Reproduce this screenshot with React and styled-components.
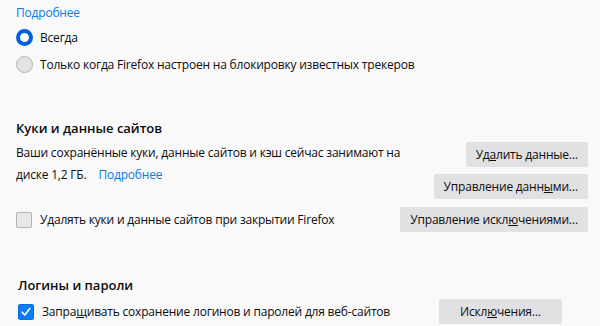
import React from "react";
import styled, { createGlobalStyle } from "styled-components";

const GlobalStyle = createGlobalStyle`
  html, body {
    margin: 0;
    padding: 0;
    background: #f9f9fa;
  }
  body {
    font-family: "Open Sans", "Noto Sans", sans-serif;
    font-size: 12px;
    letter-spacing: -0.2px;
    color: #0c0c0d;
  }
`;

const Page = styled.div`
  width: 600px;
  height: 326px;
  overflow: hidden;
  box-sizing: border-box;
  padding: 3px 12px 0 16px;
`;

const Link = styled.a`
  display: block;
  line-height: 20px;
  color: #0a7ae0;
  text-decoration: none;
  cursor: pointer;
`;

const InlineLink = styled(Link)`
  display: inline;
  margin-left: 12px;
`;

const RadioGroup = styled.div`
  display: flex;
  flex-direction: column;
  gap: 1px;
  margin-top: 1px;
`;

const OptionRow = styled.label`
  display: flex;
  align-items: center;
  gap: 7px;
  height: 26px;
`;

const Radio = styled.span`
  width: 17px;
  height: 17px;
  box-sizing: border-box;
  border-radius: 50%;
  flex-shrink: 0;
  background: ${(p) => (p.checked ? "#fff" : "#e3e3e5")};
  border: ${(p) => (p.checked ? "4px solid #0060df" : "1px solid #b1b1b3")};
`;

const Section = styled.section`
  padding-left: ${(p) => p.indent || 0}px;
`;

const Heading = styled.h2`
  margin: ${(p) => p.top}px 0 0;
  font-size: 13px;
  font-weight: 600;
  letter-spacing: 0;
  line-height: 20px;
`;

const Row = styled.div`
  display: flex;
  justify-content: space-between;
  align-items: ${(p) => p.align || "flex-start"};
  margin-top: ${(p) => p.top || 0}px;
  padding-right: ${(p) => p.right || 0}px;
`;

const Description = styled.p`
  margin: 0;
  line-height: 22px;
  width: 420px;
`;

const ButtonColumn = styled.div`
  display: flex;
  flex-direction: column;
  align-items: flex-end;
  gap: 7px;
`;

const Button = styled.button`
  height: 25px;
  box-sizing: border-box;
  padding: 0 10px;
  min-width: ${(p) => p.minWidth || 0}px;
  border: none;
  border-radius: 2px;
  background: #e1e1e3;
  color: #0c0c0d;
  font-family: inherit;
  font-size: 12px;
  letter-spacing: -0.2px;
  cursor: pointer;
  white-space: nowrap;
`;

const Key = styled.span`
  text-decoration: underline;
`;

const CheckRow = styled.label`
  display: flex;
  align-items: center;
  gap: 8px;
`;

const Checkbox = styled.span`
  width: 16px;
  height: 16px;
  box-sizing: border-box;
  flex-shrink: 0;
  border-radius: 2px;
  display: flex;
  align-items: center;
  justify-content: center;
  background: ${(p) => (p.checked ? "#0a7cf5" : "#e7e7e8")};
  border: 1px solid ${(p) => (p.checked ? "#0a6fdc" : "#b1b1b3")};
`;

const CheckMark = () => (
  <svg width="12" height="12" viewBox="0 0 12 12">
    <path d="M2.2 6.4 L4.8 9 L9.8 2.4" fill="none" stroke="#fff" strokeWidth="1.6" strokeLinecap="round" strokeLinejoin="round" />
  </svg>
);

export default function App() {
  return (
    <>
      <GlobalStyle />
      <Page>
        <Link>Подробнее</Link>
        <RadioGroup>
          <OptionRow>
            <Radio checked />
            <span>Всегда</span>
          </OptionRow>
          <OptionRow>
            <Radio />
            <span>Только когда Firefox настроен на блокировку известных трекеров</span>
          </OptionRow>
        </RadioGroup>

        <Section>
          <Heading top={41}>Куки и данные сайтов</Heading>
          <Row top={4}>
            <Description>
              Ваши сохранённые куки, данные сайтов и кэш сейчас занимают на диске 1,2 ГБ.
              <InlineLink>Подробнее</InlineLink>
            </Description>
            <ButtonColumn>
              <Button>
                Уд<Key>а</Key>лить данные…
              </Button>
              <Button>
                Управление данн<Key>ы</Key>ми…
              </Button>
            </ButtonColumn>
          </Row>
          <Row top={8} align="center">
            <CheckRow>
              <Checkbox />
              <span>Удалять куки и данные сайтов при закрытии Firefox</span>
            </CheckRow>
            <Button>
              Управление искл<Key>ю</Key>чениями…
            </Button>
          </Row>
        </Section>

        <Section indent={2}>
          <Heading top={43}>Логины и пароли</Heading>
          <Row top={4} align="center" right={26}>
            <CheckRow>
              <Checkbox checked>
                <CheckMark />
              </Checkbox>
              <span>
                Запра<Key>щ</Key>ивать сохранение логинов и паролей для веб-сайтов
              </span>
            </CheckRow>
            <Button minWidth={123}>
              Искл<Key>ю</Key>чения…
            </Button>
          </Row>
        </Section>
      </Page>
    </>
  );
}
